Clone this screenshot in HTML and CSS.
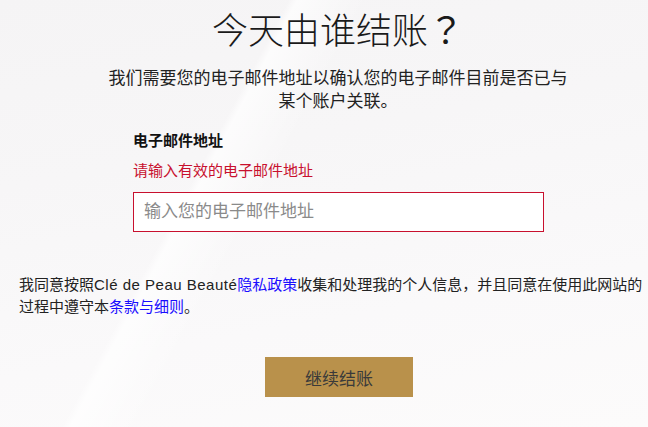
FILE: index.html
```
<!DOCTYPE html>
<html lang="zh-CN">
<head>
<meta charset="utf-8">
<title>今天由谁结账？</title>
<link rel="stylesheet" href="styles.css">
</head>
<body>
<div class="page">
  <header class="intro">
    <h1 class="title">今天由谁结账<span class="fw-punct title-q">？</span></h1>
    <p class="subtitle">我们需要您的电子邮件地址以确认您的电子邮件目前是否已与某个账户关联。</p>
  </header>
  <form class="form">
    <label class="label" for="email">电子邮件地址</label>
    <div class="error">请输入有效的电子邮件地址</div>
    <input class="input" id="email" type="email" placeholder="输入您的电子邮件地址">
  </form>
  <p class="agree">我同意按照<span class="brand">Clé de Peau Beauté</span><a class="link" href="#">隐私政策</a>收集和处理我的个人信息<span class="fw-punct">，</span>并且同意在使用此网站的过程中遵守本<a class="link" href="#">条款与细则</a>。</p>
  <div class="actions">
    <button class="btn" type="button">继续结账</button>
  </div>
</div>
</body>
</html>
```
FILE: styles.css
```
html, body {
  margin: 0;
  padding: 0;
}
body {
  width: 648px;
  height: 427px;
  overflow: hidden;
  background:
    linear-gradient(118deg, rgba(255,255,255,0) 0%, rgba(255,255,255,0) 33%, rgba(255,255,255,0.7) 34%, rgba(255,255,255,0) 42%),
    linear-gradient(170deg, #f5f4f5 0%, #f7f6f7 35%, #faf9fa 70%, #fcfbfb 100%);
  font-family: "Liberation Sans", "Noto Sans CJK SC", sans-serif;
  color: #222;
}
.page {
  display: flex;
  flex-direction: column;
}
.intro {
  width: 470px;
  margin-left: 103px;
  text-align: center;
}
.title {
  margin: 0;
  padding-top: 10px;
  height: 44px;
  font-family: "Liberation Serif", "Noto Sans CJK SC", serif;
  font-weight: 300;
  font-size: 36px;
  line-height: 44px;
  color: #1a1a1a;
}
.fw-punct {
  font-family: "Noto Sans CJK TC", "Noto Sans CJK SC", sans-serif;
  line-height: 1;
}
.title-q {
  display: inline-block;
  width: 36px;
  text-align: center;
  font-weight: 400;
}
.subtitle {
  margin: 13px 0 0;
  font-size: 17px;
  line-height: 23px;
  color: #222;
}
.form {
  display: flex;
  flex-direction: column;
  width: 411px;
  margin: 18px 0 0 133px;
}
.label {
  font-size: 15px;
  line-height: 20px;
  font-weight: 700;
  color: #111;
}
.error {
  margin-top: 10px;
  font-size: 15px;
  line-height: 20px;
  color: #c8102e;
}
.input {
  margin-top: 11px;
  box-sizing: border-box;
  height: 40px;
  width: 411px;
  border: 1px solid #c8102e;
  background: #fff;
  padding: 0 10px;
  font-family: "Liberation Sans", "Noto Sans CJK SC", sans-serif;
  font-size: 17px;
  color: #222;
  outline: none;
}
.input::placeholder {
  color: #8a8a8a;
}
.agree {
  margin: 42px 0 0;
  padding: 0 0 0 19px;
  font-size: 15px;
  line-height: 22px;
  color: #222;
}
.brand {
  letter-spacing: 0.5px;
}
.link {
  color: #1a0dff;
  text-decoration: none;
}
.actions {
  display: flex;
  justify-content: flex-start;
  margin-top: 39px;
  padding-left: 265px;
}
.btn {
  width: 148px;
  height: 40px;
  border: none;
  background: #b9914b;
  font-family: "Liberation Sans", "Noto Sans CJK SC", sans-serif;
  font-size: 17px;
  color: #3a3a3a;
  cursor: pointer;
}
```
